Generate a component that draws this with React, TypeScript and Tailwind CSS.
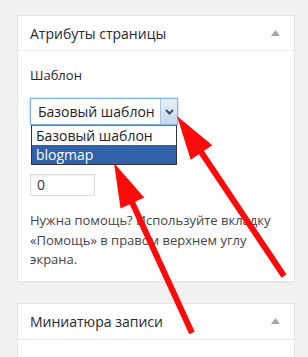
import React from "react";

const font = { fontFamily: '"Open Sans", "Noto Sans", sans-serif' };

function Toggle() {
  return (
    <svg width="9" height="6" viewBox="0 0 9 6" className="mr-[14px]">
      <path d="M4.5 0 L9 6 L0 6 Z" fill="#a0a5aa" />
    </svg>
  );
}

function Arrow({ x1, y1, x2, y2 }: { x1: number; y1: number; x2: number; y2: number }) {
  // tip at (x2,y2)
  const dx = x2 - x1;
  const dy = y2 - y1;
  const len = Math.hypot(dx, dy);
  const ux = dx / len;
  const uy = dy / len;
  const headLen = 44;
  const headW = 13;
  const bx = x2 - ux * headLen;
  const by = y2 - uy * headLen;
  const px = -uy;
  const py = ux;
  return (
    <g>
      <line x1={x1} y1={y1} x2={bx + ux * 4} y2={by + uy * 4} stroke="#ff0a0a" strokeWidth="6" />
      <polygon
        points={`${x2},${y2} ${bx + px * headW},${by + py * headW} ${bx - px * headW},${by - py * headW}`}
        fill="#ff0a0a"
      />
    </g>
  );
}

export default function App() {
  return (
    <div className="relative w-[308px] h-[357px] bg-[#f1f1f1] overflow-hidden" style={font}>
      <div className="flex flex-col gap-[21px] pt-[15px] px-[13px] pl-[17px]">
        {/* Page attributes box */}
        <div className="bg-white border border-[#e5e5e5] shadow-[0_1px_1px_rgba(0,0,0,0.04)]">
          <div className="flex items-center justify-between h-[35px] border-b border-[#eeeeee] pl-[12px]">
            <span className="text-[14px] text-[#23282d]">Атрибуты страницы</span>
            <Toggle />
          </div>
          <div className="px-[12px] pt-[14px] pb-[11px] text-[13px] text-[#444]">
            <div className="text-[13px] leading-[20px] text-[#23282d]">Шаблон</div>
            <div className="relative mt-[13px]">
              <div className="flex items-stretch w-[148px] h-[27px] border border-[#7eb4ea] shadow-[0_0_2px_rgba(30,140,190,0.5)] bg-white">
                <span className="flex-1 pl-[7px] text-[14px] leading-[25px] text-[#222]">Базовый шаблон</span>
                <span className="flex items-center justify-center w-[17px] border-l border-[#a7c4e0] bg-gradient-to-b from-[#e8f0f8] to-[#c6d8ea]">
                  <svg width="9" height="6" viewBox="0 0 9 6">
                    <path d="M1 1 L4.5 4.5 L8 1" stroke="#3d4f66" strokeWidth="2" fill="none" />
                  </svg>
                </span>
              </div>
              <div className="absolute left-[1px] top-[27px] w-[146px] border border-[#333] border-t-[#777] bg-white z-10 text-[14px] leading-[19px]">
                <div className="pl-[4px] text-[#222]">Базовый шаблон</div>
                <div className="pl-[4px] bg-[#3062a9] text-white">blogmap</div>
              </div>
            </div>
            <div className="mt-[49px] w-[65px] h-[22px] border border-[#dddddd] shadow-[inset_0_1px_2px_rgba(0,0,0,0.07)] pl-[6px] text-[14px] leading-[20px] text-[#333]">
              0
            </div>
            <p className="mt-[15px] leading-[19.5px] text-[13px] text-[#444]">
              Нужна помощь? Используйте вкладку «Помощь» в правом верхнем углу экрана.
            </p>
          </div>
        </div>

        {/* Featured image box */}
        <div className="bg-white border border-[#e5e5e5] h-[80px]">
          <div className="flex items-center justify-between h-[36px] border-b border-[#eeeeee] pl-[12px]">
            <span className="text-[14px] text-[#23282d]">Миниатюра записи</span>
            <Toggle />
          </div>
        </div>
      </div>

      <svg className="absolute inset-0 pointer-events-none z-20" width="308" height="357" viewBox="0 0 308 357">
        <Arrow x1={284} y1={276} x2={177} y2={116} />
        <Arrow x1={192} y1={333} x2={114} y2={163} />
      </svg>
    </div>
  );
}
